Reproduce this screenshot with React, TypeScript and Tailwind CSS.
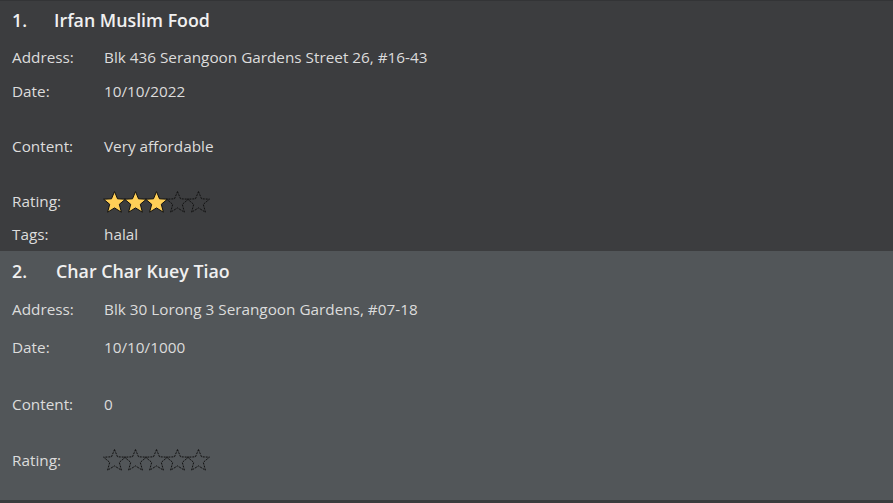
const font = { fontFamily: '"Open Sans", "Noto Sans", sans-serif' };

function Star({ filled }: { filled: boolean }) {
  return (
    <svg width="23" height="22" viewBox="0 0 23 22" className="-mr-[2px]">
      <polygon
        points="11.5,0.6 14.5,7.8 22.4,8.2 16.3,13.3 18.4,21.2 11.5,16.9 4.6,21.2 6.7,13.3 0.6,8.2 8.5,7.8"
        fill={filled ? "#ffcf57" : "none"}
        stroke="#111"
        strokeWidth="1"
        strokeDasharray={filled ? undefined : "2 1"}
        strokeLinejoin="round"
      />
    </svg>
  );
}

function Stars({ n }: { n: number }) {
  return (
    <div className="flex -ml-[1px]">
      {[0, 1, 2, 3, 4].map((i) => (
        <Star key={i} filled={i < n} />
      ))}
    </div>
  );
}

function Row({ label, h, children }: { label: string; h: string; children: React.ReactNode }) {
  return (
    <div className={`flex items-center ${h}`}>
      <div className="w-[92px] text-[15.3px] text-[#dcdcdc]">{label}</div>
      <div className="text-[15.3px] text-[#dcdcdc]">{children}</div>
    </div>
  );
}

export default function App() {
  return (
    <div className="w-[893px] h-[503px] bg-[#3a3b3d] overflow-hidden" style={font}>
      <div className="h-[251px] bg-[#3c3d3f] border-t border-[#333436] px-3">
        <div className="flex items-center h-[38px] gap-[27px] text-[17.8px] font-semibold text-[#f0f0f0]">
          <span>1.</span>
          <span>Irfan Muslim Food</span>
        </div>
        <Row label="Address:" h="h-[36px]">Blk 436 Serangoon Gardens Street 26, #16-43</Row>
        <Row label="Date:" h="h-[32px]">10/10/2022</Row>
        <Row label="Content:" h="h-[79px]">Very affordable</Row>
        <Row label="Rating:" h="h-[31px]">
          <Stars n={3} />
        </Row>
        <Row label="Tags:" h="h-[34px]">halal</Row>
      </div>
      <div className="h-[249px] bg-[#525659] px-3">
        <div className="flex items-center h-[40px] gap-[29px] text-[17.8px] font-semibold text-[#f0f0f0]">
          <span>2.</span>
          <span>Char Char Kuey Tiao</span>
        </div>
        <Row label="Address:" h="h-[37px]">Blk 30 Lorong 3 Serangoon Gardens, #07-18</Row>
        <Row label="Date:" h="h-[38px]">10/10/1000</Row>
        <Row label="Content:" h="h-[76px]">0</Row>
        <Row label="Rating:" h="h-[36px]">
          <Stars n={0} />
        </Row>
      </div>
    </div>
  );
}
